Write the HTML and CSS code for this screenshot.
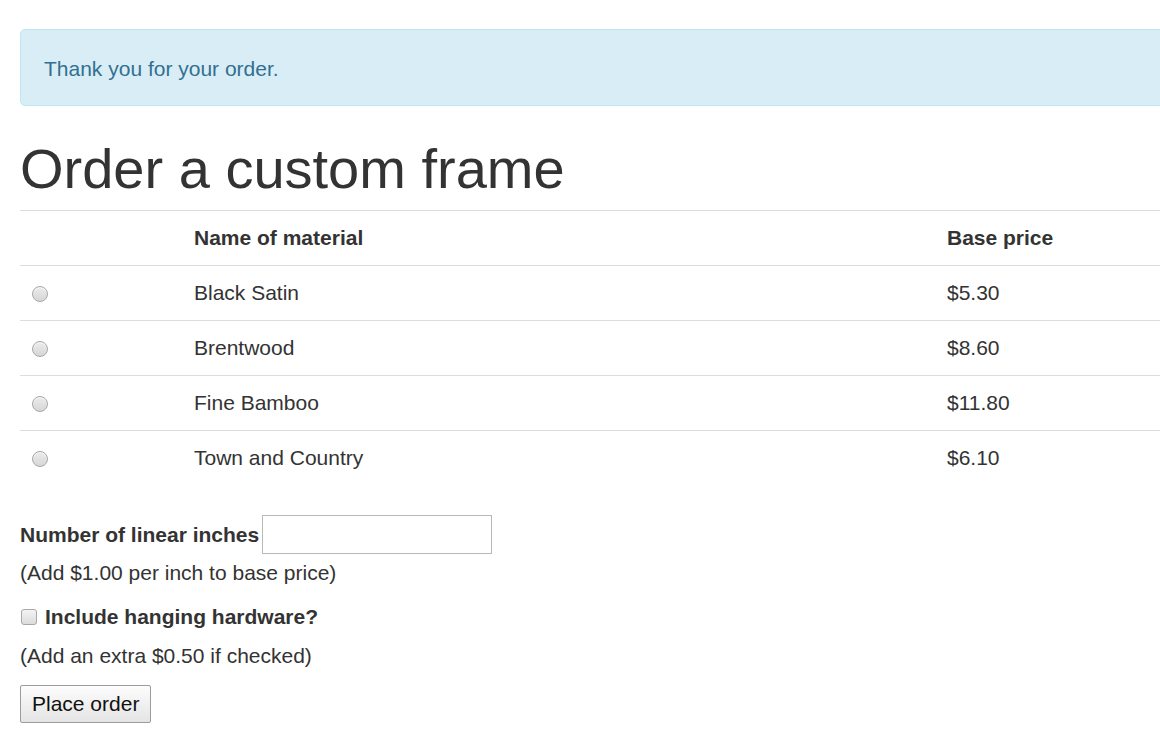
FILE: index.html
```html
<!DOCTYPE html>
<html lang="en">
<head>
<meta charset="utf-8">
<title>Order a custom frame</title>
<link rel="stylesheet" href="styles.css">
</head>
<body>
<div class="container">
  <div class="alert">Thank you for your order.</div>
  <h1 class="title">Order a custom frame</h1>
  <table class="materials">
    <thead>
      <tr><th class="c-pick"></th><th class="c-name">Name of material</th><th>Base price</th></tr>
    </thead>
    <tbody>
      <tr><td class="c-pick"><input type="radio" name="material" class="radio"></td><td class="c-name">Black Satin</td><td>$5.30</td></tr>
      <tr><td class="c-pick"><input type="radio" name="material" class="radio"></td><td class="c-name">Brentwood</td><td>$8.60</td></tr>
      <tr><td class="c-pick"><input type="radio" name="material" class="radio"></td><td class="c-name">Fine Bamboo</td><td>$11.80</td></tr>
      <tr><td class="c-pick"><input type="radio" name="material" class="radio"></td><td class="c-name">Town and Country</td><td>$6.10</td></tr>
    </tbody>
  </table>
  <form class="order-form">
    <div class="field-row">
      <label class="field-label" for="inches">Number of linear inches</label>
      <input id="inches" type="text" class="text-input">
    </div>
    <p class="help help-first">(Add $1.00 per inch to base price)</p>
    <label class="check-row"><input type="checkbox" class="check"> <span class="field-label">Include hanging hardware?</span></label>
    <p class="help help-second">(Add an extra $0.50 if checked)</p>
    <button type="button" class="btn">Place order</button>
  </form>
</div>
</body>
</html>
```

FILE: styles.css
```css
html, body {
  margin: 0;
  padding: 0;
  overflow: hidden;
  background: #fff;
}
body {
  font-family: "Liberation Sans", Arial, sans-serif;
  font-size: 21px;
  line-height: 30px;
  color: #333;
  padding-left: 20px;
}
.container {
  width: 1180px;
}
.alert {
  margin-top: 29px;
  height: 72px;
  box-sizing: content-box;
  padding: 3px 23px 0;
  display: flex;
  align-items: center;
  background: #d9edf7;
  border: 1px solid #bce8f1;
  border-radius: 5px;
  color: #31708f;
}
.title {
  margin: 32px 0 11px;
  font-size: 56px;
  line-height: 61px;
  font-weight: normal;
  color: #333;
}
.materials {
  width: 100%;
  border-collapse: collapse;
  border-spacing: 0;
}
.materials th,
.materials td {
  text-align: left;
  padding: 12px;
  height: 30px;
  line-height: 30px;
  border-top: 1px solid #dddddd;
  vertical-align: middle;
}
.materials th {
  font-weight: bold;
}
.c-pick {
  width: 138px;
}
.c-name {
  width: 729px;
}
.radio {
  appearance: none;
  -webkit-appearance: none;
  display: block;
  margin: 1px 0 0;
  width: 16px;
  height: 16px;
  border-radius: 50%;
  border: 1px solid #a8a8a8;
  box-sizing: border-box;
  background: linear-gradient(#ececec, #d6d6d6);
  box-shadow: inset 0 1px 1px rgba(255,255,255,0.7);
}
.order-form {
  margin-top: 30px;
}
.field-row {
  display: flex;
  align-items: center;
  gap: 3px;
}
.field-label {
  font-weight: bold;
}
.text-input {
  width: 230px;
  height: 39px;
  box-sizing: border-box;
  border: 1px solid #b8b8b8;
  margin: 0;
  padding: 0 6px;
  font: inherit;
}
.help {
  margin: 0;
}
.help-first {
  margin-top: 4px;
}
.check-row {
  display: flex;
  align-items: center;
  gap: 8px;
  margin-top: 14px;
  padding-left: 1px;
}
.check {
  appearance: none;
  -webkit-appearance: none;
  margin: 0;
  width: 16px;
  height: 16px;
  border-radius: 3px;
  border: 1px solid #a8a8a8;
  box-sizing: border-box;
  background: linear-gradient(#f4f4f4, #dcdcdc);
}
.help-second {
  margin-top: 9px;
}
.btn {
  margin-top: 14px;
  height: 38px;
  padding: 0 11px;
  font: inherit;
  color: #111;
  border: 1px solid #9c9c9c;
  border-radius: 2px;
  background: linear-gradient(#fdfdfd, #e4e4e4);
}
```
